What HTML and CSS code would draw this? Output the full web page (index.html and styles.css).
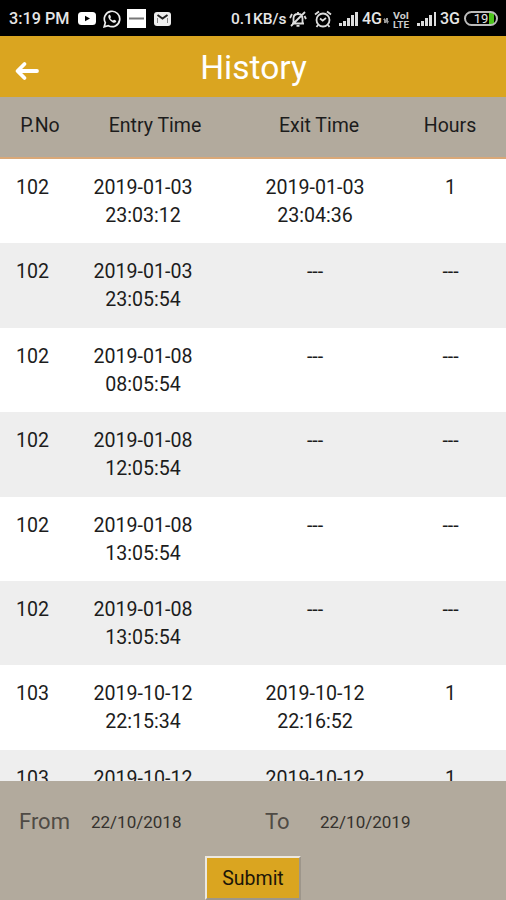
FILE: index.html
```html
<!DOCTYPE html>
<html lang="en">
<head>
    <meta charset="UTF-8">
    <title>History</title>
    <link rel="stylesheet" href="styles.css">
</head>
<body>
<div class="status-bar">
    <div class="status-left">
        <span class="status-text clock">3:19 PM</span>
        <svg class="icon-video" width="18" height="13" viewBox="0 0 18 13">
            <rect width="18" height="13" rx="3.5" fill="#fff"/>
            <path d="M7 3.7v5.6l5-2.8z" fill="#000"/>
        </svg>
        <svg class="icon-chat" width="18" height="18" viewBox="0 0 18 18">
            <path d="M1.2 16.8l1.1-4.1A7.7 7.7 0 1 1 5.3 15.7z" fill="none" stroke="#eee" stroke-width="1.7"/>
            <path d="M6.3 4.7c-2 1.3-.7 4.1 1.2 6 1.9 1.9 4.4 2.9 5.6 1.1.5-1-.1-1.2-1.9-2.1-.7-.2-.9.8-1.5.8-1-.3-2-1.3-2.4-2.2.1-.6.9-.7.6-1.5-.6-1.6-.7-2.2-1.6-2.1z" fill="#eee"/>
        </svg>
        <svg class="icon-app" width="19" height="19" viewBox="0 0 19 19">
            <rect width="19" height="19" fill="#fff"/>
            <path d="M2 9.5h15" stroke="#777" stroke-width="2"/>
        </svg>
        <svg class="icon-mail" width="17" height="14" viewBox="0 0 17 14">
            <rect width="17" height="14" rx="3" fill="#eee"/>
            <path d="M3.5 3l5 3.5 5-3.5" fill="none" stroke="#222" stroke-width="2"/>
            <path d="M3.5 6v5M13.500 6v5" fill="none" stroke="#888" stroke-width="1"/>
        </svg>
    </div>
    <div class="status-right">
        <span class="status-text speed">0.1KB/s</span>
        <svg class="icon-bell" width="18" height="18" viewBox="0 0 18 18" fill="none" stroke="#ddd" stroke-width="1.8">
            <path d="M3 13.5h12M4.500 13V8.500C4.500 5.500 6.500 4 9 4s4.500 1.500 4.500 4.500V13M9 2v2M7.500 15.800h3M2 16L16 2M1 8l2-4M17 9l-1.500-3"/>
        </svg>
        <svg class="icon-alarm" width="18" height="18" viewBox="0 0 18 18" fill="none" stroke="#ddd" stroke-width="1.8">
            <circle cx="9" cy="10" r="6.5"/>
            <path d="M6 8.5l2.7 2.2L12 8M1 4.5l4-3M17 4.5l-4-3M4 15l-1.500 2M14 15l1.500 2"/>
        </svg>
        <svg class="icon-signal first" width="20" height="14" viewBox="0 0 20 14" fill="#ddd">
            <path d="M0 11h3v3H0zM4 9h3v5H4zM8 6h3v8H8zM12 3h3v11h-3zM16 0h3v14h-3z"/>
        </svg>
        <span class="status-text net">4G</span>
        <svg class="icon-data" width="6" height="6" viewBox="0 0 6 6" fill="#999">
            <path d="M0 2l1.5-2L3 2v3H1V2zM3 3V0h2v3h1L4.5 6 3 4z"/>
        </svg>
        <svg class="volte" width="24" height="18" viewBox="0 0 24 18">
            <text x="0" y="9" textLength="16" lengthAdjust="spacingAndGlyphs">VoI</text>
            <text x="0" y="17.5" textLength="16" lengthAdjust="spacingAndGlyphs">LTE</text>
        </svg>
        <svg class="icon-signal" width="20" height="14" viewBox="0 0 20 14" fill="#ddd">
            <path d="M0 11h3v3H0zM4 9h3v5H4zM8 6h3v8H8zM12 3h3v11h-3zM17 0h2v14h-2z"/>
        </svg>
        <span class="status-text net">3G</span>
        <span class="battery">19</span>
    </div>
</div>

<header class="title-bar">
    <svg class="back" width="26" height="22" viewBox="0 0 26 22" fill="none" stroke="#fff" stroke-width="3.8" stroke-linecap="round" stroke-linejoin="round">
        <path d="M10.500 4L3.500 11l7 7M4 11h19"/>
    </svg>
    <h1>History</h1>
</header>

<div class="table-head">
    <span>P.No</span>
    <span>Entry Time</span>
    <span>Exit Time</span>
    <span>Hours</span>
</div>

<main class="list">
    <div class="row">
        <span>102</span>
        <span>2019-01-03<br>23:03:12</span>
        <span>2019-01-03<br>23:04:36</span>
        <span>1</span>
    </div>
    <div class="row">
        <span>102</span>
        <span>2019-01-03<br>23:05:54</span>
        <span>---</span>
        <span>---</span>
    </div>
    <div class="row">
        <span>102</span>
        <span>2019-01-08<br>08:05:54</span>
        <span>---</span>
        <span>---</span>
    </div>
    <div class="row">
        <span>102</span>
        <span>2019-01-08<br>12:05:54</span>
        <span>---</span>
        <span>---</span>
    </div>
    <div class="row">
        <span>102</span>
        <span>2019-01-08<br>13:05:54</span>
        <span>---</span>
        <span>---</span>
    </div>
    <div class="row">
        <span>102</span>
        <span>2019-01-08<br>13:05:54</span>
        <span>---</span>
        <span>---</span>
    </div>
    <div class="row">
        <span>103</span>
        <span>2019-10-12<br>22:15:34</span>
        <span>2019-10-12<br>22:16:52</span>
        <span>1</span>
    </div>
    <div class="row">
        <span>103</span>
        <span>2019-10-12</span>
        <span>2019-10-12</span>
        <span>1</span>
    </div>
</main>

<footer class="filter">
    <div class="dates">
        <span class="label">From</span>
        <span class="date">22/10/2018</span>
        <span class="label">To</span>
        <span class="date">22/10/2019</span>
    </div>
    <button class="submit">Submit</button>
</footer>
</body>
</html>
```
FILE: styles.css
```css
* {
    box-sizing: border-box;
}

body {
    margin: 0;
    height: 900px;
    display: flex;
    flex-direction: column;
    overflow: hidden;
    font-family: Roboto, "Liberation Sans", sans-serif;
    color: #1c1c1c;
    background-color: #fff;
}

/* status bar */
.status-bar {
    flex: none;
    height: 36px;
    display: flex;
    justify-content: space-between;
    padding: 1px 8px 0 9px;
    background-color: #000;
    color: #e6e6e6;
}
.status-left,
.status-right {
    display: flex;
    align-items: center;
}
.status-bar svg {
    flex: none;
}
.status-text {
    font-size: 16px;
    font-weight: 500;
    white-space: nowrap;
}
.clock {
    width: 69px;
    font-size: 16.2px;
}
.icon-chat {
    margin-left: 7px;
}
.icon-app {
    margin-left: 6px;
}
.icon-mail {
    margin-left: 8px;
}
.speed {
    width: 58px;
    font-size: 15.5px;
}
.icon-alarm {
    margin-left: 7px;
}
.icon-signal.first {
    margin-left: 7px;
}
.net {
    width: 21px;
    margin-left: 3px;
}
.icon-data {
    margin: 5px 4px 0 0;
}
.volte {
    fill: #ccc;
    font-size: 9.5px;
    font-weight: 700;
}
.battery {
    width: 34px;
    height: 15px;
    margin-left: 3px;
    border: 2px solid #bbb;
    border-radius: 8px;
    background: linear-gradient(to right, transparent 23px, #4cc41c 23px, #4cc41c 28px, transparent 28px);
    font-size: 13px;
    line-height: 12px;
    text-align: center;
}

/* title */
.title-bar {
    flex: none;
    height: 61px;
    display: grid;
    grid-template-columns: 54px 1fr 54px;
    align-items: center;
    background-color: #daa520;
    color: #fff;
}
.back {
    margin: 8px 0 0 14px;
}
.title-bar h1 {
    margin: 1px 0 0 1px;
    font-size: 33.5px;
    font-weight: 400;
    text-align: center;
}

/* list */
.table-head {
    flex: none;
    height: 62px;
    display: grid;
    grid-template-columns: 80px 150px 178px 84px;
    padding-top: 17px;
    border-bottom: 2px solid #d9a878;
    background-color: #b2aa9d;
    font-size: 19.5px;
    line-height: 24px;
    text-align: center;
}
.list {
    flex: 1;
    min-height: 0;
    overflow: hidden;
}
.row {
    height: 84.4px;
    display: grid;
    grid-template-columns: 65px 156px 188px 83px;
    padding-top: 15px;
    font-size: 19.6px;
    line-height: 28px;
    text-align: center;
}
.row:nth-child(even) {
    background-color: #eee;
}

/* date filter */
.filter {
    flex: none;
    height: 119px;
    padding-top: 27px;
    background-color: #b2aa9d;
}
.dates {
    display: grid;
    grid-template-columns: 72px 174px 55px 1fr;
    align-items: center;
    padding-left: 19px;
    line-height: 28px;
}
.label {
    font-size: 22px;
    color: #4f4b45;
}
.date {
    font-size: 17px;
    color: #35322e;
}
.submit {
    display: block;
    width: 96px;
    height: 44px;
    margin: 20px auto 0;
    padding: 0;
    border: 2px solid;
    border-color: #ece8e0 #9d968b #9d968b #ece8e0;
    background-color: #daa520;
    color: #1c1608;
    font-family: inherit;
    font-size: 19.5px;
}
```
